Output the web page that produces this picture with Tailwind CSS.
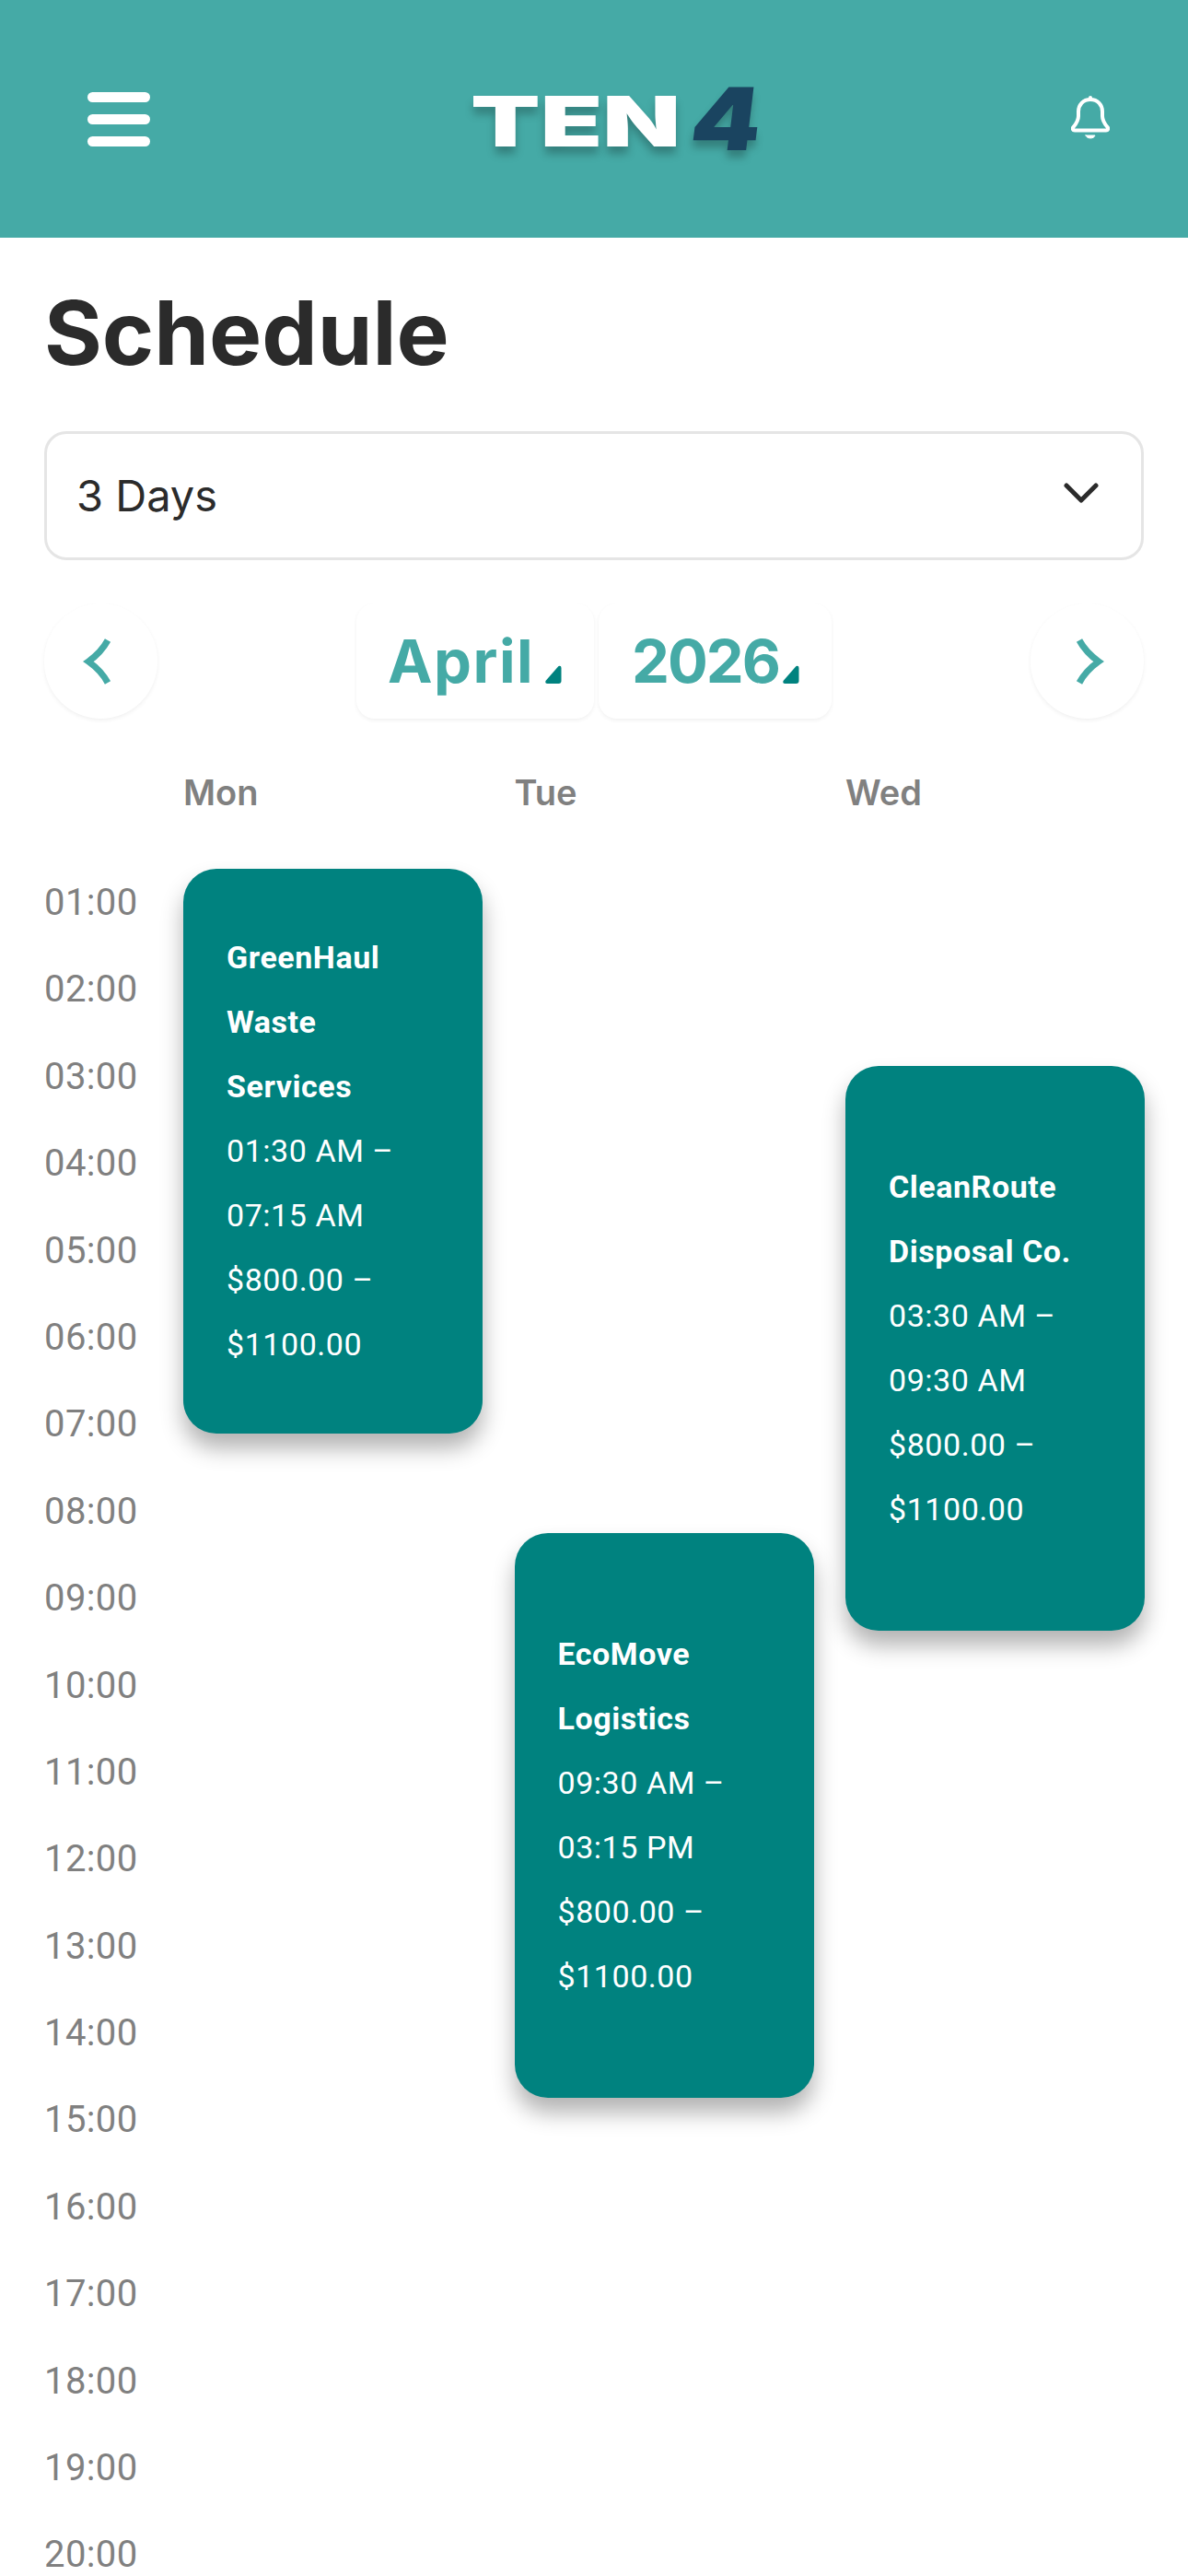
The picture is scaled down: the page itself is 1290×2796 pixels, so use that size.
<!DOCTYPE html>
<html lang="en">
<head>
    <meta charset="UTF-8">
    <meta name="viewport" content="width=device-width, initial-scale=1.0">
    <title>Schedule</title>
    <script src="https://cdn.jsdelivr.net/npm/@tailwindcss/browser@4"></script>
</head>
<body class="bg-white font-['Roboto',sans-serif]">
<div class="w-[1290px] h-[2796px] overflow-hidden">

    <!-- Header -->
    <header class="h-[258px] bg-[#45aaa6] flex items-center justify-between pl-[95px] pr-[85px]">
        <div class="w-[68px] flex flex-col gap-[13px]">
            <div class="h-[11px] rounded-full bg-white"></div>
            <div class="h-[11px] rounded-full bg-white"></div>
            <div class="h-[11px] rounded-full bg-white"></div>
        </div>
        <div class="flex items-end h-[70px] w-[308px] ml-[3px] mt-[10px] font-['Inter',sans-serif] font-black leading-none [text-shadow:0_8px_8px_rgba(0,0,0,0.25)]">
            <span class="inline-block w-[240px] text-[76px] text-white origin-left scale-x-[1.45]">TEN</span>
            <span class="inline-block mb-[-7px] text-[94px] text-[#1a4460] origin-left scale-x-[1.15] -skew-x-6">4</span>
        </div>
        <svg class="w-[42px] h-[50px]" viewBox="0 0 42 50" fill="none" stroke="white" stroke-width="4" stroke-linecap="round" stroke-linejoin="round">
            <path d="M21 4c-8 0-13 6-13 13v5c0 5-3 9-5.500 12-1.500 1.500-.5 3.500 1.500 3.500h34c2 0 3-2 1.500-3.500C37 31 34 27 34 22v-5c0-7-5-13-13-13z"/>
            <path d="M21 2v2"/>
            <path d="M16 43h10c-1 4-9 4-10 0z" fill="white" stroke-width="1"/>
        </svg>
    </header>

    <main class="px-[48px]">
        <h1 class="mt-[48px] text-[96px] leading-[110px] font-bold text-[#2b2b2b] font-['Inter',sans-serif]">Schedule</h1>

        <!-- View select -->
        <div class="mt-[52px] h-[140px] border-[3px] border-[#e5e5e5] rounded-[24px] flex items-center justify-between pl-[32px] pr-[46px]">
            <span class="text-[47px] text-[#2b2b2b] font-['Inter',sans-serif]">3 Days</span>
            <svg class="w-[38px] h-[24px] mb-[6px]" viewBox="0 0 38 24" fill="none" stroke="#2b2b2b" stroke-width="5" stroke-linecap="round" stroke-linejoin="round">
                <path d="M3 4l16 16L35 4"/>
            </svg>
        </div>

        <!-- Month nav -->
        <div class="mt-[47px] h-[125px] flex items-stretch justify-between">
            <button class="w-[123px] h-[125px] rounded-full bg-white shadow-[0_2px_4px_rgba(0,0,0,0.06)] flex items-center justify-center">
                <svg class="w-[32px] h-[52px] mr-[7px]" viewBox="0 0 32 52" fill="none" stroke="#45aaa6" stroke-width="7" stroke-linejoin="miter">
                    <path d="M27 3Q20 16 6 26Q20 36 27 49"/>
                </svg>
            </button>
            <div class="flex gap-[5px] font-['Inter',sans-serif] font-bold text-[#45aaa6] text-[65px]">
                <div class="relative w-[258px] rounded-[20px] bg-white shadow-[0_2px_4px_rgba(0,0,0,0.06)] pl-[34px] pt-[21px] leading-[84px] tracking-[1.5px]">
                    April
                    <svg class="absolute left-[204px] top-[67px] w-[19px] h-[20px]" viewBox="0 0 18 20"><path d="M15 1L1 17q-1 3 2 3h12q3 0 3-3V3q0-3-3-2z" fill="#00827f"/></svg>
                </div>
                <div class="relative w-[253px] rounded-[20px] bg-white shadow-[0_2px_4px_rgba(0,0,0,0.06)] pl-[36px] pt-[21px] leading-[84px] tracking-[-2px]">
                    2026
                    <svg class="absolute left-[199px] top-[67px] w-[19px] h-[20px]" viewBox="0 0 18 20"><path d="M15 1L1 17q-1 3 2 3h12q3 0 3-3V3q0-3-3-2z" fill="#00827f"/></svg>
                </div>
            </div>
            <button class="w-[123px] h-[125px] rounded-full bg-white shadow-[0_2px_4px_rgba(0,0,0,0.06)] flex items-center justify-center">
                <svg class="w-[32px] h-[52px] ml-[5px]" viewBox="0 0 32 52" fill="none" stroke="#45aaa6" stroke-width="7" stroke-linejoin="miter">
                    <path d="M5 3Q12 16 26 26Q12 36 5 49"/>
                </svg>
            </button>
        </div>

        <!-- Day labels -->
        <div class="mt-[56px] ml-[151px] grid grid-cols-[repeat(3,325px)] gap-x-[34.500px] text-[38px] leading-[48px] font-semibold text-[#808080] font-['Inter',sans-serif]">
            <div>Mon</div>
            <div>Tue</div>
            <div>Wed</div>
        </div>

        <!-- Calendar -->
        <div class="mt-[59px] flex">
            <div class="w-[151px] shrink-0 text-[40px] tracking-[0.4px] text-[#808080]">
                <div class="h-[94.400px] mt-[-10px] leading-[94.400px]">01:00</div>
                <div class="h-[94.400px] leading-[94.400px]">02:00</div>
                <div class="h-[94.400px] leading-[94.400px]">03:00</div>
                <div class="h-[94.400px] leading-[94.400px]">04:00</div>
                <div class="h-[94.400px] leading-[94.400px]">05:00</div>
                <div class="h-[94.400px] leading-[94.400px]">06:00</div>
                <div class="h-[94.400px] leading-[94.400px]">07:00</div>
                <div class="h-[94.400px] leading-[94.400px]">08:00</div>
                <div class="h-[94.400px] leading-[94.400px]">09:00</div>
                <div class="h-[94.400px] leading-[94.400px]">10:00</div>
                <div class="h-[94.400px] leading-[94.400px]">11:00</div>
                <div class="h-[94.400px] leading-[94.400px]">12:00</div>
                <div class="h-[94.400px] leading-[94.400px]">13:00</div>
                <div class="h-[94.400px] leading-[94.400px]">14:00</div>
                <div class="h-[94.400px] leading-[94.400px]">15:00</div>
                <div class="h-[94.400px] leading-[94.400px]">16:00</div>
                <div class="h-[94.400px] leading-[94.400px]">17:00</div>
                <div class="h-[94.400px] leading-[94.400px]">18:00</div>
                <div class="h-[94.400px] leading-[94.400px]">19:00</div>
                <div class="h-[94.400px] leading-[94.400px]">20:00</div>
            </div>
            <div class="grid grid-cols-[repeat(3,325px)] gap-x-[34.500px] items-start text-[34px] leading-[70px] tracking-[0.55px] text-white">
                <div class="h-[613px] rounded-[36px] bg-[#00827f] shadow-[0_16px_24px_rgba(0,0,0,0.3)] px-[47px] pb-[2px] flex flex-col justify-center">
                    <div class="font-bold">GreenHaul Waste Services</div>
                    <div>01:30 AM – 07:15 AM</div>
                    <div>$800.00 – $1100.00</div>
                </div>
                <div class="mt-[721px] h-[613px] rounded-[36px] bg-[#00827f] shadow-[0_16px_24px_rgba(0,0,0,0.3)] px-[47px] pb-[2px] flex flex-col justify-center">
                    <div class="font-bold">EcoMove Logistics</div>
                    <div>09:30 AM – 03:15 PM</div>
                    <div>$800.00 – $1100.00</div>
                </div>
                <div class="mt-[214px] h-[613px] rounded-[36px] bg-[#00827f] shadow-[0_16px_24px_rgba(0,0,0,0.3)] px-[47px] pb-[2px] flex flex-col justify-center">
                    <div class="font-bold">CleanRoute Disposal Co.</div>
                    <div>03:30 AM – 09:30 AM</div>
                    <div>$800.00 – $1100.00</div>
                </div>
            </div>
        </div>
    </main>
</div>
</body>
</html>
